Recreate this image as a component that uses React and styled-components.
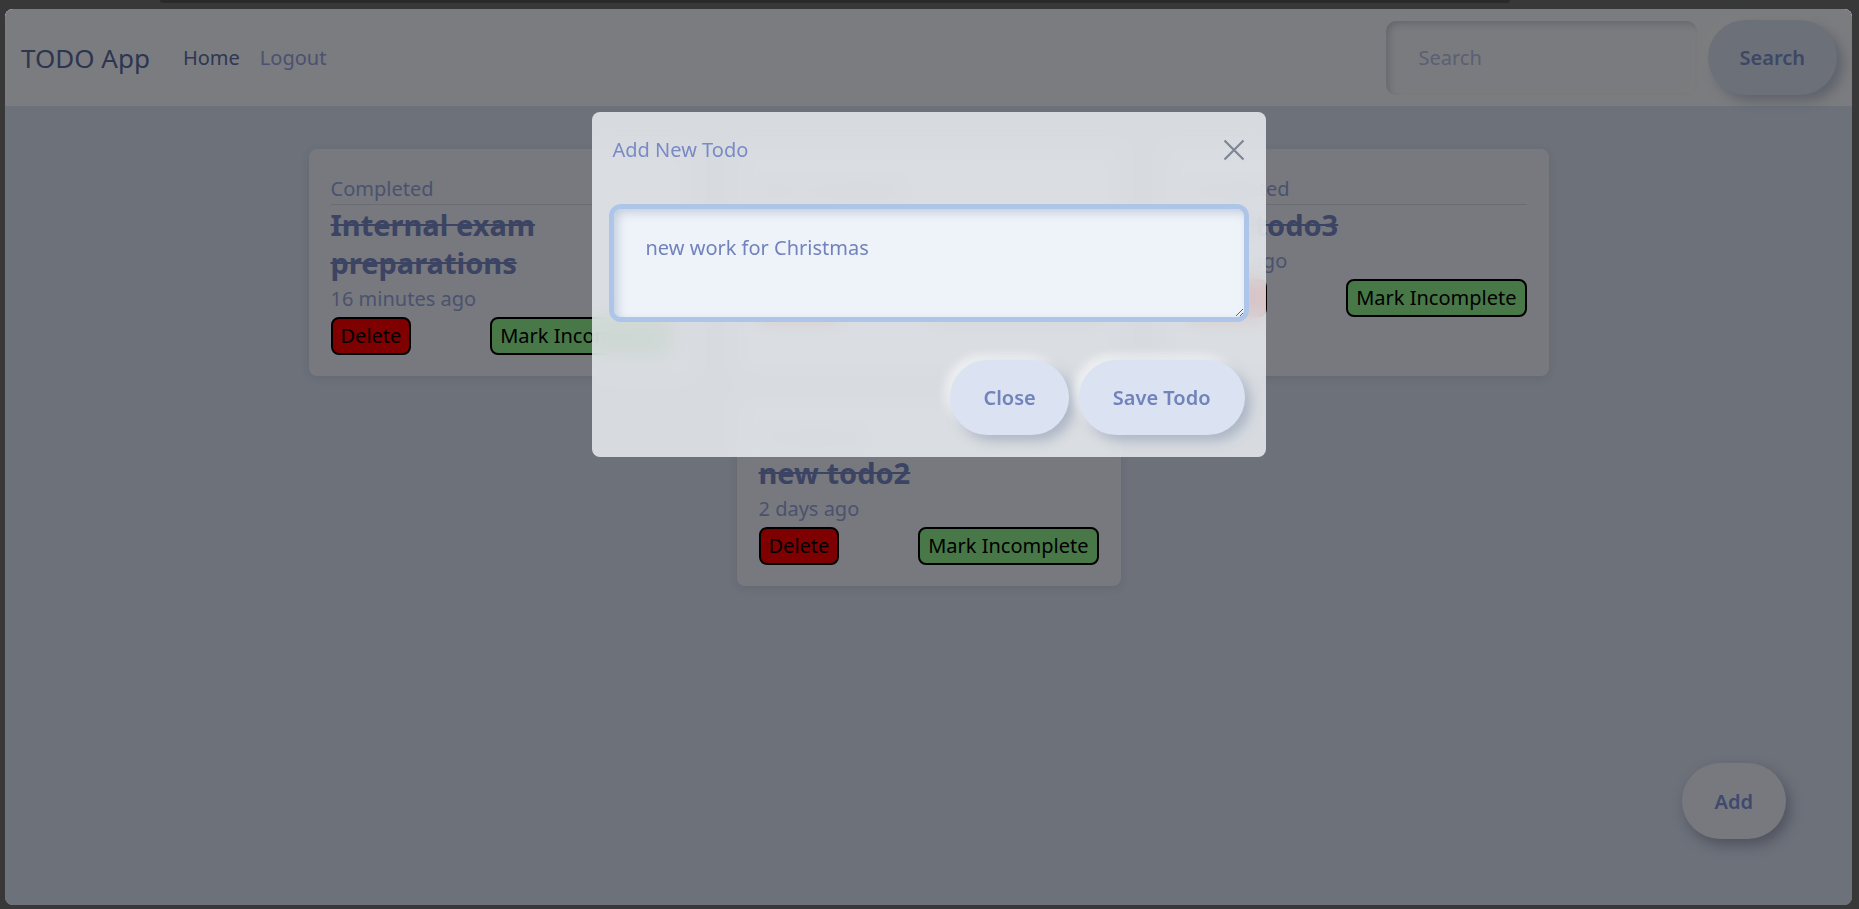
import React from 'react';
import styled, { createGlobalStyle } from 'styled-components';

const GlobalStyle = createGlobalStyle`
  * { box-sizing: border-box; }
  html, body { margin: 0; padding: 0; background: #383838; }
  body { font-family: 'Segoe UI', 'Noto Sans', sans-serif; }
  button, input, textarea { font-family: inherit; }
`;

const Frame = styled.div`
  width: 1859px;
  height: 909px;
  padding: 0 7px 4px 5px;
  display: flex;
  flex-direction: column;
  background: #383838;
`;

const TopStrip = styled.div`
  height: 9px;
  flex-shrink: 0;
`;

const Tab = styled.div`
  margin-left: 155px;
  width: 1350px;
  height: 3px;
  background: #2a2a2a;
  border-radius: 0 0 6px 6px;
`;

const Window = styled.div`
  position: relative;
  flex: 1;
  border-radius: 8px;
  overflow: hidden;
  background: #d8e2f4;
`;

const Navbar = styled.nav`
  height: 97px;
  background: #f6f8fe;
  display: flex;
  align-items: center;
  padding: 0 15px 0 16px;
`;

const Brand = styled.a`
  font-size: 26px;
  color: #5a6aa0;
  margin-right: 23px;
  line-height: 36px;
`;

const NavLink = styled.a`
  font-size: 20px;
  line-height: 30px;
  padding: 0 10px;
  color: ${({ active }) => (active ? '#5e6ea8' : '#94a4e0')};
`;

const Spacer = styled.div`
  flex: 1;
`;

const SearchInput = styled.input`
  width: 311px;
  height: 74px;
  border: none;
  border-radius: 10px;
  background: #f4f6fc;
  box-shadow: inset 3px 3px 7px rgba(150, 160, 185, 0.45),
    inset -3px -3px 7px rgba(255, 255, 255, 0.7);
  padding: 0 33px;
  font-size: 20px;
  color: #7a8ecc;
  outline: none;
  &::placeholder {
    color: #b4c0e6;
  }
`;

const SoftButton = styled.button`
  height: ${({ h }) => h || 75}px;
  padding: 0 ${({ px }) => px || 32}px;
  border: none;
  border-radius: 40px;
  background: ${({ bg }) => bg || '#d8e0f2'};
  color: ${({ fg }) => fg || '#7a8ecc'};
  font-size: 20px;
  font-weight: 600;
  box-shadow: 6px 6px 12px rgba(120, 135, 165, 0.45),
    -5px -5px 10px rgba(255, 255, 255, 0.6);
  cursor: pointer;
`;

const SearchButton = styled(SoftButton)`
  margin-left: 11px;
`;

const Main = styled.main`
  padding-top: 43px;
`;

const CardGrid = styled.div`
  width: 1240px;
  margin: 0 auto;
  display: flex;
  flex-wrap: wrap;
  justify-content: center;
  gap: 21px 44px;
`;

const Card = styled.div`
  width: 384px;
  background: #f0f2fc;
  border-radius: 8px;
  padding: 25px 22px 21px;
  box-shadow: 0 2px 8px rgba(60, 70, 100, 0.12);
  display: flex;
  flex-direction: column;
`;

const Status = styled.div`
  font-size: 20px;
  line-height: 30px;
  color: #94a6dc;
  border-bottom: 1px solid rgba(0, 0, 0, 0.1);
`;

const Title = styled.h3`
  margin: 1px 0 0;
  font-size: 29px;
  line-height: 38px;
  font-weight: 700;
  color: #7888c6;
  text-decoration: ${({ done }) => (done ? 'line-through' : 'none')};
`;

const Time = styled.div`
  margin-top: 2px;
  font-size: 20px;
  line-height: 30px;
  color: #94a6dc;
`;

const Actions = styled.div`
  margin-top: 3px;
  display: flex;
  justify-content: space-between;
`;

const ActionButton = styled.button`
  height: 38px;
  padding: 0 8px;
  border: 2px solid #000;
  border-radius: 8px;
  background: ${({ variant }) => (variant === 'delete' ? '#ff0000' : '#90ee90')};
  color: #000;
  font-size: 20px;
  line-height: 30px;
`;

const AddButton = styled(SoftButton)`
  position: absolute;
  right: 66px;
  bottom: 66px;
  height: 76px;
  padding: 0 33px;
  background: #eef2fc;
  color: #7e94dc;
  box-shadow: 4px 6px 14px rgba(40, 50, 80, 0.35);
`;

const Overlay = styled.div`
  position: absolute;
  inset: 0;
  background: rgba(0, 0, 0, 0.5);
  display: flex;
  justify-content: center;
  align-items: flex-start;
  padding-top: 103px;
`;

const Modal = styled.div`
  width: 674px;
  height: 345px;
  border-radius: 8px;
  background: rgba(242, 246, 250, 0.8);
  backdrop-filter: blur(10px);
  display: flex;
  flex-direction: column;
`;

const ModalHeader = styled.div`
  display: flex;
  justify-content: space-between;
  align-items: center;
  padding: 23px 21px 21px;
`;

const ModalTitle = styled.h5`
  margin: 0;
  font-size: 20px;
  line-height: 30px;
  font-weight: 400;
  color: #7a8ac4;
`;

const CloseIcon = styled.button`
  width: 22px;
  height: 22px;
  padding: 0;
  border: none;
  background: none;
  display: flex;
  cursor: pointer;
`;

const ModalBody = styled.div`
  padding: 18px 17px 0;
`;

const TodoText = styled.textarea`
  display: block;
  width: 100%;
  height: 118px;
  border: 5px solid #adc5e8;
  border-radius: 12px;
  background: #eef3f9;
  box-shadow: inset 4px 4px 8px rgba(165, 178, 200, 0.55);
  padding: 24px 32px;
  font-size: 20px;
  line-height: 30px;
  color: #7282bb;
  outline: none;
`;

const ModalFooter = styled.div`
  display: flex;
  justify-content: flex-end;
  gap: 10px;
  padding: 38px 21px 22px;
`;

const todos = [
  { id: 1, title: 'Internal exam preparations', done: true, time: '16 minutes ago' },
  { id: 2, title: 'new todo', done: false, time: '2 days ago' },
  { id: 3, title: 'new todo3', done: true, time: '2 days ago' },
  { id: 4, title: 'new todo2', done: true, time: '2 days ago' },
];

const TodoCard = ({ todo }) => (
  <Card>
    <Status>{todo.done ? 'Completed' : 'Not Completed'}</Status>
    <Title done={todo.done}>{todo.title}</Title>
    <Time>{todo.time}</Time>
    <Actions>
      <ActionButton variant="delete">Delete</ActionButton>
      <ActionButton>{todo.done ? 'Mark Incomplete' : 'Mark Complete'}</ActionButton>
    </Actions>
  </Card>
);

const App = () => {
  return (
    <Frame>
      <GlobalStyle />
      <TopStrip>
        <Tab />
      </TopStrip>
      <Window>
        <Navbar>
          <Brand>TODO App</Brand>
          <NavLink active>Home</NavLink>
          <NavLink>Logout</NavLink>
          <Spacer />
          <SearchInput placeholder="Search" />
          <SearchButton>Search</SearchButton>
        </Navbar>
        <Main>
          <CardGrid>
            {todos.map((todo) => (
              <TodoCard key={todo.id} todo={todo} />
            ))}
          </CardGrid>
        </Main>
        <AddButton>Add</AddButton>
        <Overlay>
          <Modal>
            <ModalHeader>
              <ModalTitle>Add New Todo</ModalTitle>
              <CloseIcon aria-label="Close">
                <svg width="22" height="22" viewBox="0 0 22 22">
                  <path d="M1.5 1.5 L20.5 20.5 M20.5 1.5 L1.5 20.5" stroke="#7d8597" strokeWidth="2.2" />
                </svg>
              </CloseIcon>
            </ModalHeader>
            <ModalBody>
              <TodoText defaultValue="new work for Christmas" />
            </ModalBody>
            <ModalFooter>
              <SoftButton bg="#dbe3f2" fg="#7282bb" px={33}>Close</SoftButton>
              <SoftButton bg="#dbe3f2" fg="#7282bb" px={34}>Save Todo</SoftButton>
            </ModalFooter>
          </Modal>
        </Overlay>
      </Window>
    </Frame>
  );
};

export default App;
